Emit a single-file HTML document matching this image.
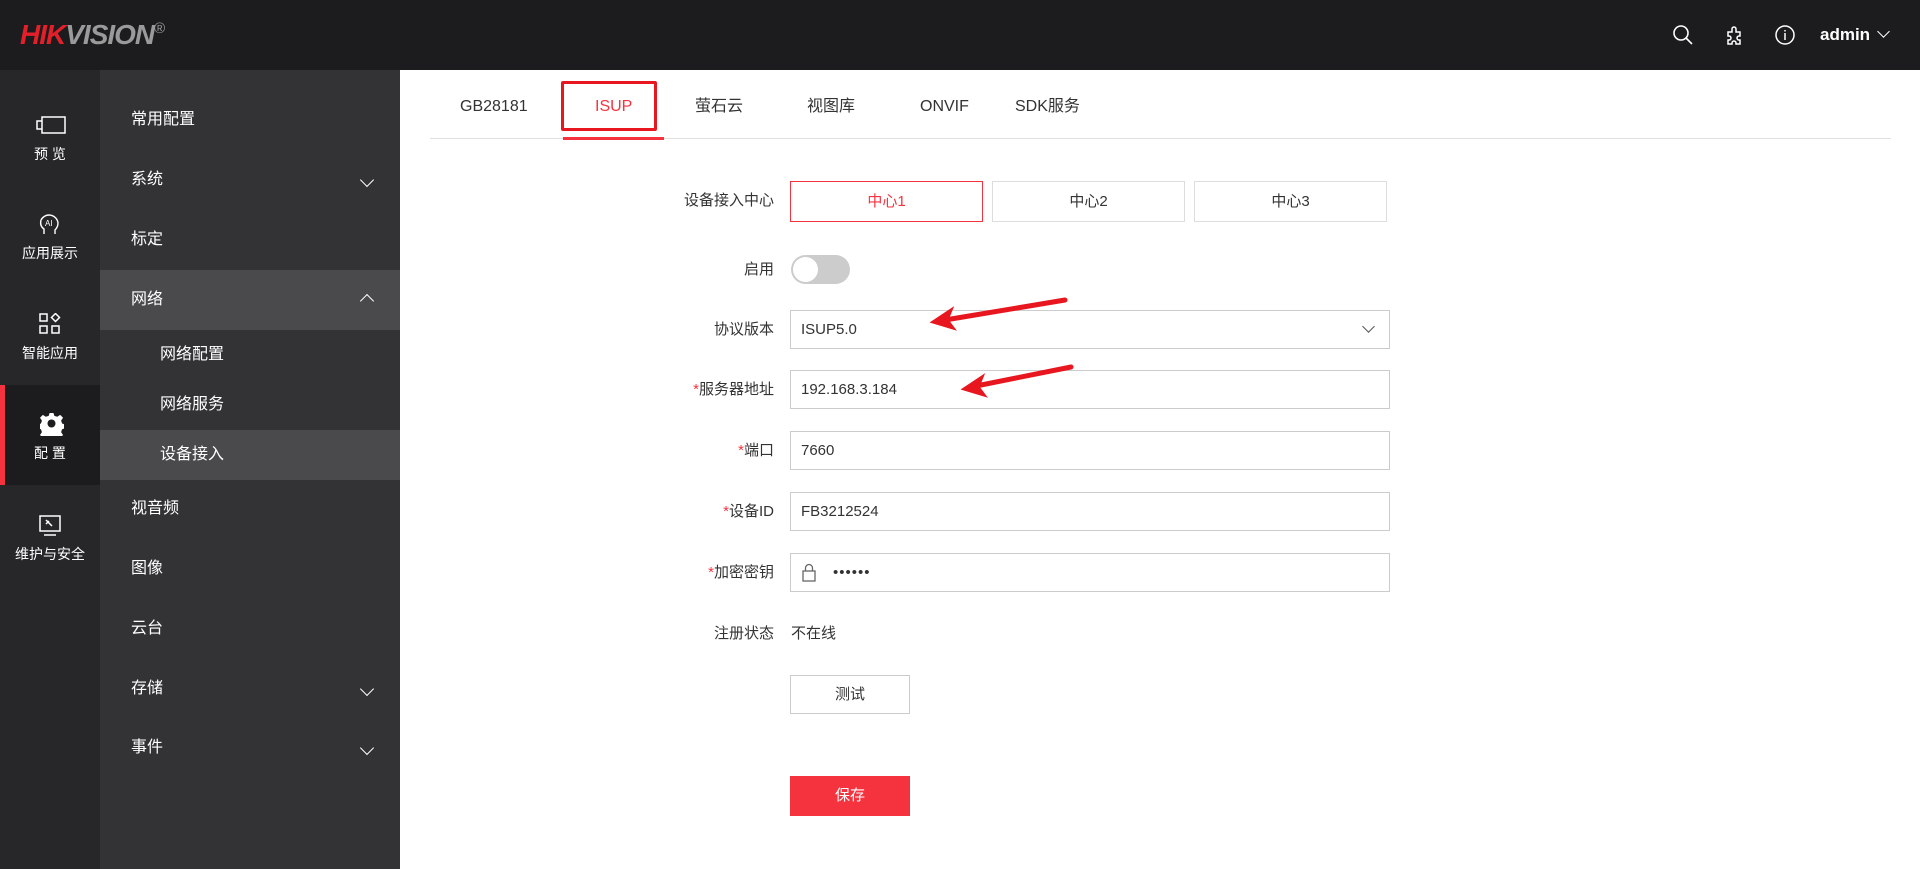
<!DOCTYPE html>
<html><head><meta charset="utf-8"><style>
*{margin:0;padding:0;box-sizing:border-box}
body{width:1920px;height:869px;overflow:hidden;background:#fff;font-family:"Liberation Sans","Noto Sans CJK SC",sans-serif;position:relative}
.hdr{position:absolute;left:0;top:0;width:1920px;height:70px;background:#1c1c1e}
.logo{position:absolute;left:20px;top:19px;font-size:28px;line-height:32px;font-weight:bold;font-style:italic;letter-spacing:-1px}
.nav{position:absolute;left:0;top:70px;width:100px;height:799px;background:#272729}
.sub{position:absolute;left:100px;top:70px;width:300px;height:799px;background:#333335}
.ni{position:absolute;left:0;width:100px;text-align:center;color:#fff;font-size:14px;line-height:18px}
.si{position:absolute;left:0;width:300px;height:50px;line-height:50px;color:#fff;font-size:16px;padding-left:31px}
.si.c{padding-left:60px}
.chev{position:absolute;right:28px;top:20px;width:10px;height:10px;border-right:1.6px solid #fff;border-bottom:1.6px solid #fff;transform:rotate(45deg)}
.chev.up{transform:rotate(-135deg);top:26px}
.t{position:absolute;top:97px;font-size:16px;line-height:20px;height:20px;color:#333}
.lbl{position:absolute;right:1146px;font-size:15px;line-height:20px;color:#333;text-align:right}
.lbl b{color:#f5333f;font-weight:normal}
.inp{position:absolute;left:790px;width:600px;height:39px;border:1px solid #ccc;font-size:15px;color:#333;line-height:37px;padding-left:10px}
.cb{position:absolute;top:181px;height:41px;width:193px;border:1px solid #ddd;text-align:center;line-height:39px;font-size:15px;color:#333}
</style></head><body>
<div class="hdr">
<div class="logo"><span style="color:#e3202a">HIK</span><span style="color:#9a9a9a">VISION</span><span style="color:#9a9a9a;font-size:15px;font-style:normal;vertical-align:top;line-height:20px;font-weight:normal">®</span></div>
<svg style="position:absolute;left:1672px;top:24px" width="22" height="22" viewBox="0 0 22 22" fill="none" stroke="#fff" stroke-width="1.6"><circle cx="9" cy="9" r="7"/><path d="M14 14l6 6"/></svg>
<svg style="position:absolute;left:1725px;top:24px" width="22" height="22" viewBox="0 0 22 22" fill="none" stroke="#fff" stroke-width="1.5"><path d="M3 8h4V5a2 2 0 0 1 4 0v3h4v4h-1a2 2 0 0 0 0 4h1v4H11v-1a2 2 0 0 0-4 0v1H3v-4h1a2 2 0 0 0 0-4H3z"/></svg>
<svg style="position:absolute;left:1774px;top:24px" width="22" height="22" viewBox="0 0 22 22" fill="none" stroke="#fff" stroke-width="1.5"><circle cx="11" cy="11" r="9"/><path d="M11 9v7M11 6v1.5"/></svg>
<div style="position:absolute;left:1820px;top:25px;color:#fff;font-size:17px;line-height:20px;font-weight:bold">admin</div>
<div style="position:absolute;left:1879px;top:27px;width:9px;height:9px;border-right:1.5px solid #fff;border-bottom:1.5px solid #fff;transform:rotate(45deg)"></div>
</div>
<div class="nav">
<svg style="position:absolute;left:35px;top:45px" width="32" height="20" viewBox="0 0 32 20" fill="none" stroke="#fff" stroke-width="1.5"><rect x="7" y="2" width="23" height="16"/><path d="M7 6H2v8h5"/></svg>
<div class="ni" style="top:75px">预 览</div>
<svg style="position:absolute;left:38px;top:141px" width="24" height="26" viewBox="0 0 24 26" fill="none" stroke="#fff" stroke-width="1.4"><path d="M6 23v-5c-3-2-4-5-3-9a9 9 0 0 1 17 3c0 3-1 5-3 7v4"/><text x="7" y="15" font-size="8" fill="#fff" stroke="none" font-family="Liberation Sans">AI</text></svg>
<div class="ni" style="top:174px">应用展示</div>
<svg style="position:absolute;left:39px;top:243px" width="22" height="22" viewBox="0 0 22 22" fill="none" stroke="#fff" stroke-width="1.5"><rect x="1" y="1" width="7" height="7"/><rect x="1" y="13" width="7" height="7"/><rect x="13" y="13" width="7" height="7"/><path d="M16.5 0.5l4 4-4 4-4-4z"/></svg>
<div class="ni" style="top:274px">智能应用</div>
<div style="position:absolute;left:0;top:315px;width:100px;height:100px;background:#1c1c1e"></div>
<div style="position:absolute;left:0;top:315px;width:5px;height:100px;background:#f5333f"></div>
<svg style="position:absolute;left:40px;top:342px" width="24" height="24" viewBox="0 0 24 24"><path fill="#fff" d="M10 1h4l1 3 3 1 3-2 3 3-2 3 1 3 3 1v4l-3 1-1 3 2 3-3 3-3-2-3 1-1 3h-4l-1-3-3-1-3 2-3-3 2-3-1-3-3-1v-4l3-1 1-3-2-3 3-3 3 2 3-1z" transform="scale(0.96)"/><circle cx="11.5" cy="11.5" r="4" fill="#1c1c1e"/></svg>
<div class="ni" style="top:374px">配 置</div>
<svg style="position:absolute;left:38px;top:445px" width="24" height="22" viewBox="0 0 24 22" fill="none" stroke="#fff" stroke-width="1.5"><rect x="2" y="1" width="20" height="15"/><path d="M6 20h12M8 5l6 6M8 9l3-3"/></svg>
<div class="ni" style="top:475px">维护与安全</div>
</div>
<div class="sub">
<div class="si" style="top:25px">常用配置</div>
<div class="si" style="top:85px">系统<span class="chev"></span></div>
<div class="si" style="top:145px">标定</div>
<div class="si" style="top:200px;height:60px;line-height:60px;background:#4a4a4c">网络<span class="chev up"></span></div>
<div class="si c" style="top:260px">网络配置</div>
<div class="si c" style="top:310px">网络服务</div>
<div class="si c" style="top:360px;background:#4a4a4c">设备接入</div>
<div class="si" style="top:414px">视音频</div>
<div class="si" style="top:474px">图像</div>
<div class="si" style="top:534px">云台</div>
<div class="si" style="top:594px">存储<span class="chev"></span></div>
<div class="si" style="top:653px">事件<span class="chev"></span></div>
</div>
<div class="t" style="left:460px">GB28181</div>
<div class="t" style="left:595px;color:#f5333f">ISUP</div>
<div class="t" style="left:695px">萤石云</div>
<div class="t" style="left:807px">视图库</div>
<div class="t" style="left:920px">ONVIF</div>
<div class="t" style="left:1015px">SDK服务</div>
<div style="position:absolute;left:561px;top:81px;width:96px;height:50px;border:3px solid #e8161e;border-radius:2px"></div>
<div style="position:absolute;left:430px;top:138px;width:1461px;height:1px;background:#e0e0e0"></div>
<div style="position:absolute;left:563px;top:137px;width:101px;height:3px;background:#f5333f"></div>
<div class="lbl" style="top:191px">设备接入中心</div>
<div class="cb" style="left:790px;border-color:#f5333f;color:#f5333f">中心1</div>
<div class="cb" style="left:992px">中心2</div>
<div class="cb" style="left:1194px">中心3</div>
<div class="lbl" style="top:260px">启用</div>
<div style="position:absolute;left:791px;top:255px;width:59px;height:29px;border-radius:15px;background:#ccc"></div>
<div style="position:absolute;left:793px;top:257px;width:25px;height:25px;border-radius:50%;background:#fff"></div>
<div class="lbl" style="top:320px">协议版本</div>
<div class="inp" style="top:310px">ISUP5.0</div>
<div style="position:absolute;left:1364px;top:322px;width:9px;height:9px;border-right:1.3px solid #555;border-bottom:1.3px solid #555;transform:rotate(45deg)"></div>
<div class="lbl" style="top:380px"><b>*</b>服务器地址</div>
<div class="inp" style="top:370px">192.168.3.184</div>
<div class="lbl" style="top:441px"><b>*</b>端口</div>
<div class="inp" style="top:431px">7660</div>
<div class="lbl" style="top:502px"><b>*</b>设备ID</div>
<div class="inp" style="top:492px">FB3212524</div>
<div class="lbl" style="top:563px"><b>*</b>加密密钥</div>
<div class="inp" style="top:553px;padding-left:42px;letter-spacing:1px">••••••</div>
<svg style="position:absolute;left:801px;top:563px" width="16" height="19" viewBox="0 0 16 19" fill="none" stroke="#666" stroke-width="1.3"><rect x="2" y="8" width="12" height="10"/><path d="M4.5 8V5a3.5 3.5 0 0 1 7 0v3"/></svg>
<div class="lbl" style="top:624px">注册状态</div>
<div style="position:absolute;left:791px;top:624px;font-size:15px;line-height:20px;color:#333">不在线</div>
<div style="position:absolute;left:790px;top:675px;width:120px;height:39px;border:1px solid #ccc;text-align:center;line-height:37px;font-size:15px;color:#333">测试</div>
<div style="position:absolute;left:790px;top:776px;width:120px;height:40px;background:#f5333f;text-align:center;line-height:40px;font-size:15px;color:#fff">保存</div>
<svg style="position:absolute;left:0;top:0" width="1920" height="869" fill="none"><path d="M1065 300L945 320" stroke="#e8161e" stroke-width="5" stroke-linecap="round"/><path d="M933 322l18-12-4 10 6 8z" fill="#e8161e" stroke="#e8161e" stroke-width="3"/><path d="M1071 367L976 386" stroke="#e8161e" stroke-width="5" stroke-linecap="round"/><path d="M964 389l18-12-4 10 6 8z" fill="#e8161e" stroke="#e8161e" stroke-width="3"/></svg>
</body></html>
